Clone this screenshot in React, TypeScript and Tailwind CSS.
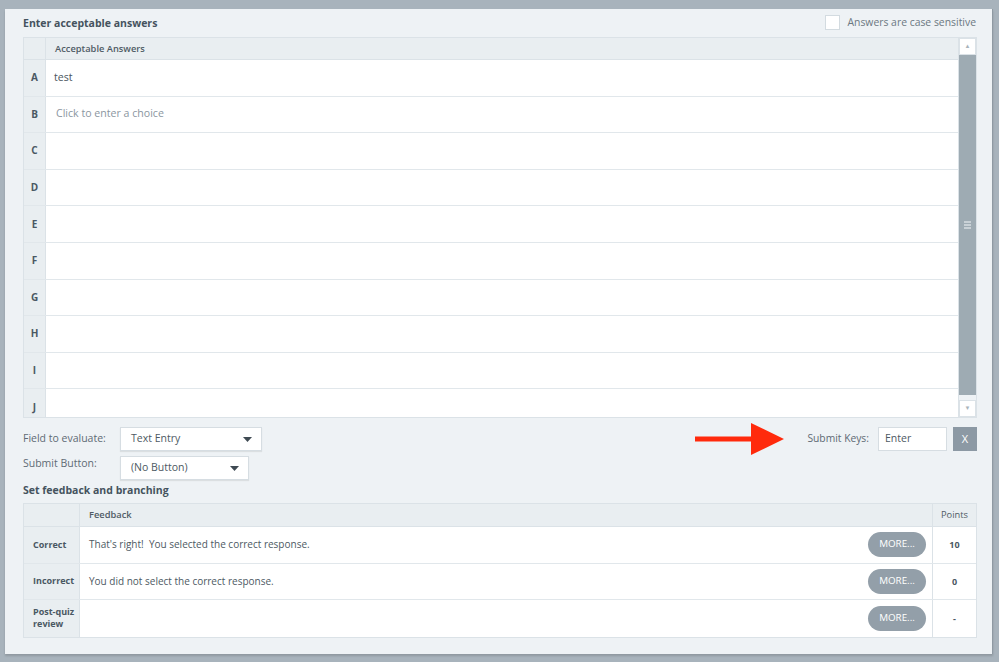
import React from 'react'

const letters = ['A', 'B', 'C', 'D', 'E', 'F', 'G', 'H', 'I', 'J']

const answers: Record<string, { text: string; placeholder?: boolean }> = {
    A: { text: 'test' },
    B: { text: 'Click to enter a choice', placeholder: true },
}

const feedback = [
    { label: 'Correct', text: "That's right!\u00a0 You selected the correct response.", points: '10' },
    { label: 'Incorrect', text: 'You did not select the correct response.', points: '0' },
    { label: 'Post-quiz review', text: '', points: '-' },
]

const Caret = () => (
    <svg width="9" height="5" viewBox="0 0 9 5" className="fill-[#3f4a53]">
        <path d="M0 0h9L4.5 5z" />
    </svg>
)

const Select: React.FC<{ value: string; width: string }> = ({ value, width }) => (
    <div className={`flex h-[24px] ${width} items-center justify-between border border-[#d6dde2] bg-white pl-[10px] pr-[9px] text-[10.5px] text-[#4d5963] shadow-[0_1px_1px_rgba(0,0,0,0.08)]`}>
        <span>{value}</span>
        <Caret />
    </div>
)

const RedArrow = () => (
    <svg width="89" height="32" viewBox="0 0 89 32" className="-my-[4px]">
        <path d="M0 13.5h56V0l33 16-33 16V18.5H0z" fill="#ff2a0c" />
    </svg>
)

export default function App() {
    return (
        <div className="h-[662px] w-[999px] bg-[#a8b3bc] pl-[5px] pr-[6px] pt-[9px] font-['Open_Sans',sans-serif]">
            <div className="h-[645px] border-r border-[#8f9aa3] bg-[#eef2f5] pl-[18px] pr-[15px] shadow-[0_2px_2px_rgba(0,0,0,0.15)]">
                <div className="flex h-[28px] items-center justify-between">
                    <h2 className="pt-[1px] text-[10.5px] font-bold text-[#45535e]">Enter acceptable answers</h2>
                    <label className="flex items-center gap-[7px] pr-[1px] text-[10.4px] text-[#6c7882]">
                        <span className="h-[15px] w-[15px] border border-[#d3dbe0] bg-white" />
                        Answers are case sensitive
                    </label>
                </div>

                <div className="flex h-[381px] border border-[#dbe2e7] bg-white">
                    <div className="flex flex-1 flex-col overflow-hidden">
                        <div className="flex h-[22px] shrink-0 border-b border-[#dbe2e7] bg-[#e9eef1] text-[9.3px] font-semibold text-[#4f5b65]">
                            <div className="w-[22px] border-r border-[#dbe2e7]" />
                            <div className="flex items-center pl-[9px]">Acceptable Answers</div>
                        </div>
                        {letters.map((l) => {
                            const a = answers[l]
                            return (
                                <div key={l} className="flex h-[36.6px] shrink-0 border-b border-[#e1e7eb]">
                                    <div className="flex w-[22px] items-center justify-center border-r border-[#dbe2e7] bg-[#e9eef1] text-[10px] font-bold text-[#4a5863]">{l}</div>
                                    <div className={`flex flex-1 items-center text-[10.6px] ${a?.placeholder ? 'pl-[10px] text-[#8b969f]' : 'pl-[8px] text-[#4a5560]'}`}>{a?.text}</div>
                                </div>
                            )
                        })}
                    </div>
                    <div className="flex w-[18px] flex-col border-l border-[#dbe2e7] bg-[#eef2f5]">
                        <div className="flex h-[17px] items-center justify-center border border-[#dbe2e7] bg-white text-[6px] text-[#a9b3ba]">▲</div>
                        <div className="flex h-[340px] items-center justify-center bg-[#9eabb3]">
                            <div className="flex flex-col gap-[1px]">
                                <span className="h-[2px] w-[7px] bg-[#c9d1d6]" />
                                <span className="h-[2px] w-[7px] bg-[#c9d1d6]" />
                                <span className="h-[2px] w-[7px] bg-[#c9d1d6]" />
                            </div>
                        </div>
                        <div className="flex-1" />
                        <div className="flex h-[17px] items-center justify-center border border-[#dbe2e7] bg-white text-[6px] text-[#a9b3ba]">▼</div>
                    </div>
                </div>

                <div className="mt-[9px] flex h-[24px] items-center justify-between">
                    <div className="flex items-center">
                        <span className="w-[97px] text-[10.5px] text-[#5e6a74]">Field to evaluate:</span>
                        <Select value="Text Entry" width="w-[142px]" />
                    </div>
                    <div className="flex items-center">
                        <RedArrow />
                        <span className="ml-[23px] text-[10.3px] text-[#5e6a74]">Submit Keys:</span>
                        <div className="ml-[9px] flex h-[24px] w-[69px] items-center border border-[#d6dde2] bg-white pl-[6px] text-[10.5px] text-[#4d5963]">Enter</div>
                        <button className="ml-[6px] flex h-[24px] w-[24px] items-center justify-center bg-[#8c99a4] text-[11px] text-white">X</button>
                    </div>
                </div>
                <div className="mt-[5px] flex items-start">
                    <span className="mt-[0px] w-[97px] text-[10.5px] text-[#5e6a74]">Submit Button:</span>
                    <Select value="(No Button)" width="w-[129px]" />
                </div>

                <h2 className="mt-[2px] text-[10.5px] font-bold leading-[16px] text-[#45535e]">Set feedback and branching</h2>

                <div className="mt-[5px] border border-[#dbe2e7] bg-white">
                    <div className="flex h-[23px] border-b border-[#dbe2e7] bg-[#e9eef1] text-[9.3px] text-[#4f5b65]">
                        <div className="w-[56px] border-r border-[#dbe2e7]" />
                        <div className="flex flex-1 items-center pl-[9px] font-semibold">Feedback</div>
                        <div className="flex w-[44px] items-center justify-center border-l border-[#dbe2e7]">Points</div>
                    </div>
                    {feedback.map((f, i) => (
                        <div key={f.label} className={`flex h-[36.6px] ${i < feedback.length - 1 ? 'border-b border-[#e1e7eb]' : ''}`}>
                            <div className="flex w-[56px] items-center border-r border-[#dbe2e7] bg-[#e9eef1] pl-[9px] text-[9px] font-bold leading-[12px] text-[#4a5863]">{f.label}</div>
                            <div className="flex flex-1 items-center justify-between pl-[9px] pr-[6px] text-[10px] text-[#4d5963]">
                                <span>{f.text}</span>
                                <button className="flex h-[25px] w-[58px] items-center justify-center rounded-full bg-[#939fa9] text-[9.8px] text-white">MORE...</button>
                            </div>
                            <div className="flex w-[44px] items-center justify-center border-l border-[#dbe2e7] text-[9px] font-bold text-[#4a5863]">{f.points}</div>
                        </div>
                    ))}
                </div>
            </div>
        </div>
    )
}
